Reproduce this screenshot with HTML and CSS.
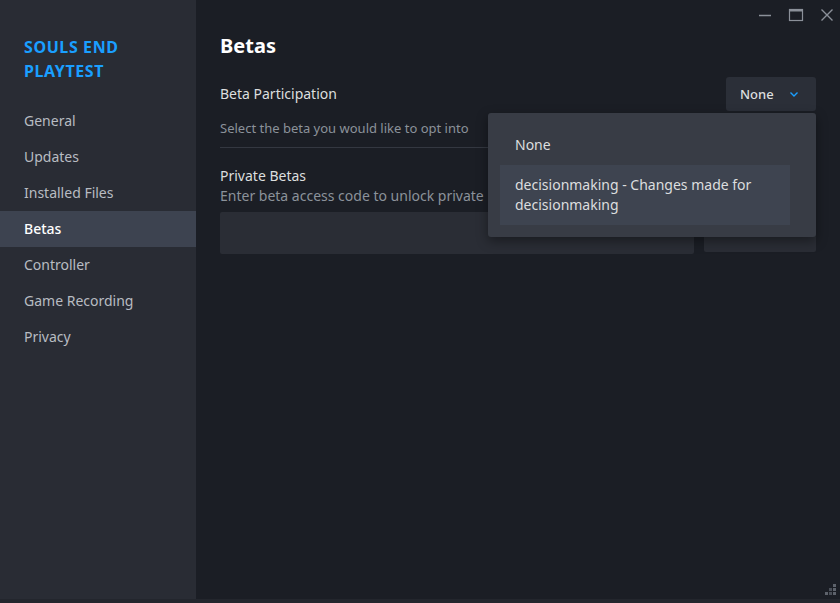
FILE: index.html
```html
<!DOCTYPE html>
<html lang="en">
<head>
    <meta charset="UTF-8">
    <title>Properties - Betas</title>
    <link rel="stylesheet" href="styles.css">
</head>
<body>
    <div class="window">
        <aside class="sidebar">
            <div class="game-title">SOULS END PLAYTEST</div>
            <nav class="nav">
                <div class="nav-item">General</div>
                <div class="nav-item">Updates</div>
                <div class="nav-item">Installed Files</div>
                <div class="nav-item active">Betas</div>
                <div class="nav-item">Controller</div>
                <div class="nav-item">Game Recording</div>
                <div class="nav-item">Privacy</div>
            </nav>
        </aside>

        <main class="content">
            <!-- Window controls -->
            <div class="titlebar">
                <svg class="win-btn" width="16" height="16" viewBox="0 0 16 16"><path d="M2 8.5h12" stroke="#8b9099" stroke-width="1.5"/></svg>
                <svg class="win-btn" width="16" height="16" viewBox="0 0 16 16"><rect x="1.5" y="2.5" width="13" height="11" fill="none" stroke="#8b9099" stroke-width="1.2"/><path d="M1.5 3.5h13" stroke="#8b9099" stroke-width="2"/></svg>
                <svg class="win-btn" width="16" height="16" viewBox="0 0 16 16"><path d="M2.5 2.5l11 11M13.5 2.5l-11 11" stroke="#8b9099" stroke-width="1.4"/></svg>
            </div>

            <h1>Betas</h1>

            <div class="section">
                <div class="row">
                    <div class="label">Beta Participation</div>
                    <div class="select">
                        <span>None</span>
                        <svg width="12" height="12" viewBox="0 0 12 12"><path d="M2.5 4.5L6 8l3.5-3.5" fill="none" stroke="#1a9fff" stroke-width="1.4"/></svg>
                    </div>
                </div>
                <div class="hint">Select the beta you would like to opt into</div>
            </div>

            <div class="section private">
                <div class="label">Private Betas</div>
                <div class="hint big">Enter beta access code to unlock private betas</div>
                <div class="code-row">
                    <div class="code-input"></div>
                    <div class="code-btn">Check Code</div>
                </div>
            </div>

            <!-- Open dropdown menu -->
            <div class="menu">
                <div class="menu-item">None</div>
                <div class="menu-item selected">decisionmaking - Changes made for decisionmaking</div>
            </div>

            <svg class="grip" width="12" height="12" viewBox="0 0 12 12">
                <rect x="9" y="1" width="3" height="3" fill="#5d626b"/>
                <rect x="5" y="5" width="3" height="3" fill="#4a4f58"/>
                <rect x="9" y="5" width="3" height="3" fill="#5d626b"/>
                <rect x="1" y="9" width="3" height="3" fill="#5d626b"/>
                <rect x="5" y="9" width="3" height="3" fill="#4a4f58"/>
                <rect x="9" y="9" width="3" height="3" fill="#5d626b"/>
            </svg>
        </main>
    </div>
    <div class="bottom-edge"></div>
</body>
</html>
```

FILE: styles.css
```css
body {
    margin: 0;
    font-family: 'Noto Sans', 'Open Sans', sans-serif;
    background-color: #1b1e25;
    width: 840px;
    height: 603px;
    overflow: hidden;
}

.window {
    display: flex;
    height: 599px;
}

.bottom-edge {
    height: 4px;
    background-color: #23262d;
}

/* Sidebar */
.sidebar {
    width: 196px;
    flex-shrink: 0;
    background-color: #292c34;
}

.game-title {
    padding: 35px 60px 0 24px;
    color: #1a9fff;
    font-weight: bold;
    font-size: 16px;
    line-height: 24px;
    letter-spacing: 0.6px;
}

.nav {
    margin-top: 20px;
}

.nav-item {
    height: 36px;
    line-height: 36px;
    padding-left: 24px;
    font-size: 14px;
    color: #b8bcc2;
}

.nav-item.active {
    background-color: #3d4350;
    color: #ffffff;
    font-weight: 500;
}

/* Main content */
.content {
    flex: 1;
    position: relative;
    padding: 0 24px;
    color: #dcdedf;
}

.titlebar {
    display: flex;
    justify-content: flex-end;
    gap: 15px;
    margin-right: -19px;
    padding-top: 7px;
    height: 20px;
}

h1 {
    margin: 5px 0 0 0;
    font-size: 20px;
    line-height: 28px;
    color: #ffffff;
    font-weight: bold;
}

.section {
    margin-top: 17px;
}

.row {
    display: flex;
    justify-content: space-between;
    align-items: center;
}

.label {
    font-size: 14px;
    line-height: 20px;
}

.select {
    display: flex;
    align-items: center;
    justify-content: space-between;
    width: 90px;
    box-sizing: border-box;
    height: 34px;
    padding: 0 16px 0 14px;
    background-color: #2b2f38;
    border-radius: 3px;
    font-size: 13px;
    font-weight: 500;
}

.hint {
    margin-top: 8px;
    padding-bottom: 10px;
    border-bottom: 1px solid #343841;
    font-size: 13px;
    line-height: 18px;
    color: #8b929a;
}

.private {
    margin-top: 18px;
}

.hint.big {
    margin-top: 0;
    padding-bottom: 6px;
    border-bottom: none;
    font-size: 14px;
    line-height: 20px;
}

.code-row {
    display: flex;
    gap: 10px;
}

.code-input {
    flex: 1;
    height: 42px;
    background-color: #2a2d35;
    border-radius: 2px;
}

.code-btn {
    width: 112px;
    height: 40px;
    line-height: 40px;
    text-align: center;
    background-color: #2a2d35;
    border-radius: 2px;
    font-size: 13px;
}

.menu {
    position: absolute;
    left: 292px;
    top: 113px;
    width: 304px;
    padding: 12px;
    background-color: #383c45;
    border-radius: 3px;
    box-shadow: 0 4px 12px rgba(0, 0, 0, 0.4);
}

.menu-item {
    padding: 10px 15px;
    font-size: 14px;
    line-height: 20px;
    color: #dcdedf;
}

.menu-item.selected {
    margin-right: 14px;
    background-color: #3e4450;
}

.grip {
    position: absolute;
    right: 4px;
    bottom: 4px;
}
```
